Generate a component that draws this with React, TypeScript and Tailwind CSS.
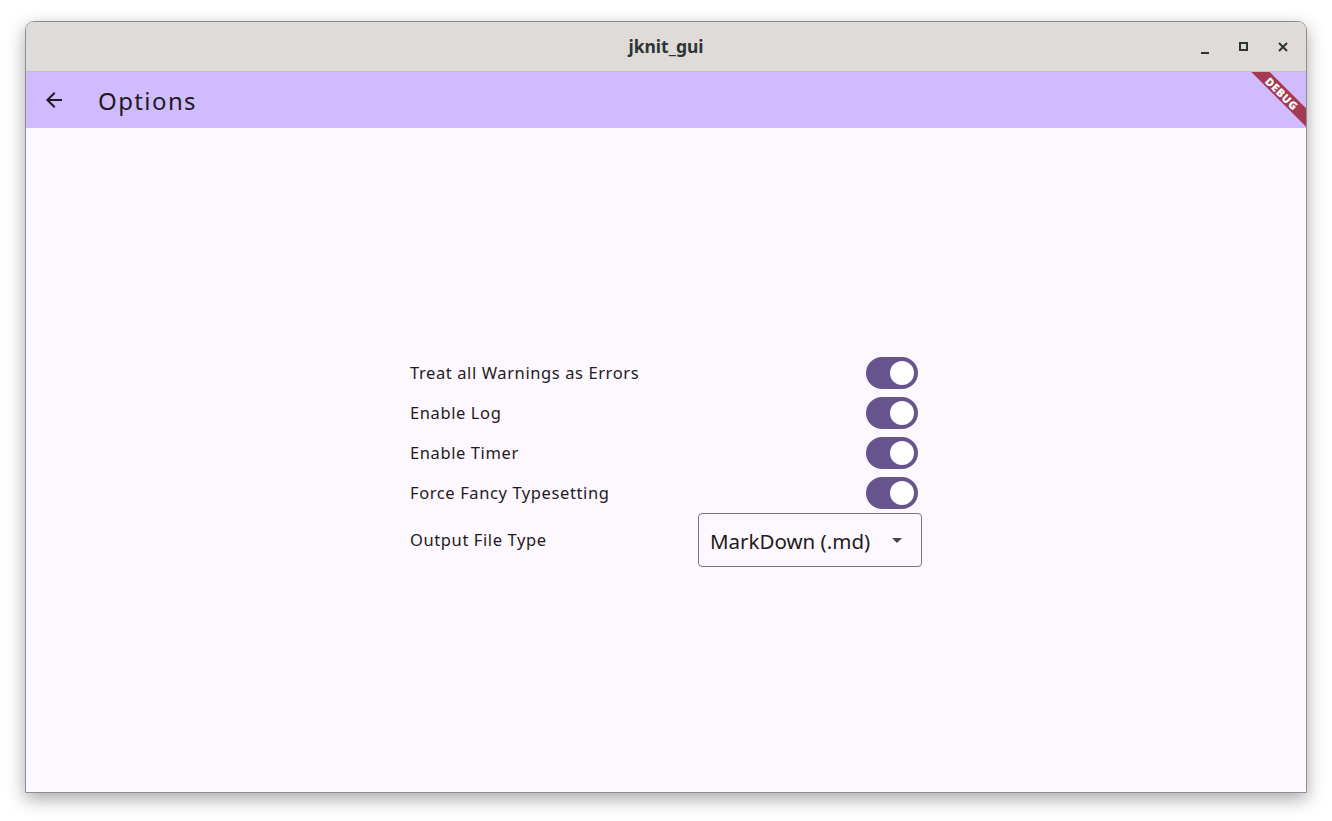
import React from "react";

function Switch() {
  return (
    <div className="mr-[4px] flex h-[32px] w-[52px] items-center justify-end rounded-full bg-[#67548e] pr-[4px]">
      <div className="h-[24px] w-[24px] rounded-full bg-white" />
    </div>
  );
}

const rows = [
  "Treat all Warnings as Errors",
  "Enable Log",
  "Enable Timer",
  "Force Fancy Typesetting",
];

export default function App() {
  return (
    <div className="h-[821px] w-[1332px] bg-white pl-[25px] pt-[21px]" style={{ fontFamily: '"Noto Sans", sans-serif' }}>
      <div className="flex h-[772px] w-[1282px] flex-col overflow-hidden rounded-t-[9px] border border-[#8e8e8e] shadow-[0_6px_18px_rgba(0,0,0,0.35)]">
        {/* title bar */}
        <div className="relative flex h-[50px] shrink-0 items-center justify-center border-b border-[#c2bfbc] bg-[#dedbd8]">
          <span className="text-[17.5px] font-bold text-[#2e3436]">jknit_gui</span>
          <div className="absolute right-0 top-0 flex h-full items-center pr-[4px]">
            <div className="flex h-[24px] w-[39px] items-end justify-center pb-[5px]">
              <div className="h-[2px] w-[8px] bg-[#2e3436]" />
            </div>
            <div className="flex h-[24px] w-[39px] items-center justify-center">
              <div className="h-[9px] w-[9px] border-2 border-[#2e3436]" />
            </div>
            <div className="flex h-[24px] w-[39px] items-center justify-center">
              <svg width="10" height="10" viewBox="0 0 10 10">
                <path d="M1 1 L9 9 M9 1 L1 9" stroke="#2e3436" strokeWidth="2" />
              </svg>
            </div>
          </div>
        </div>
        {/* app area */}
        <div className="relative flex flex-1 flex-col overflow-hidden">
          <div className="flex h-[56px] shrink-0 items-center bg-[#d1bbff]">
            <div className="ml-[16px] flex h-[24px] w-[24px] items-center justify-center">
              <svg width="24" height="24" viewBox="0 0 24 24">
                <path d="M20 11H7.83l5.59-5.59L12 4l-8 8 8 8 1.41-1.41L7.83 13H20v-2z" fill="#1d1b20" />
              </svg>
            </div>
            <span className="ml-[32px] pt-[2px] text-[24px] tracking-[1.4px] text-[#1d1b20]">Options</span>
          </div>
          <div className="flex flex-1 items-center justify-center bg-[#fdf7ff]">
            <div className="flex w-[512px] flex-col text-[#1d1b20]">
              {rows.map((r) => (
                <div key={r} className="flex h-[40px] items-center justify-between">
                  <span className="pt-[1px] text-[16.5px] tracking-[0.6px]">{r}</span>
                  <Switch />
                </div>
              ))}
              <div className="flex h-[54px] items-center justify-between">
                <span className="pt-[1px] text-[16.5px] tracking-[0.6px]">Output File Type</span>
                <div className="flex h-[54px] w-[224px] items-center justify-between rounded-[4px] border border-[#79747e] pl-[11px] pr-[12px]">
                  <span className="pt-[3px] text-[20.5px]">MarkDown (.md)</span>
                  <svg width="24" height="24" viewBox="0 0 24 24">
                    <path d="M7 10l5 5 5-5z" fill="#49454f" />
                  </svg>
                </div>
              </div>
            </div>
          </div>
          {/* debug banner */}
          <div className="absolute right-[-36px] top-[15px] flex h-[13px] w-[120px] rotate-45 items-center justify-center bg-[#a53b53]">
            <span className="text-[11px] font-black leading-none tracking-[0.6px] text-white">DEBUG</span>
          </div>
        </div>
      </div>
    </div>
  );
}
